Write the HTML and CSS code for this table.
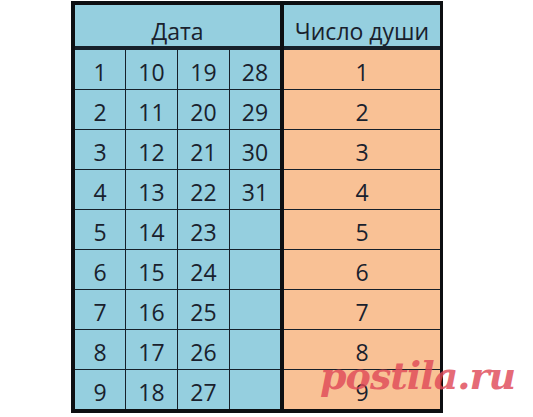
FILE: index.html
```html
<!DOCTYPE html>
<html lang="ru">
<head>
<meta charset="utf-8">
<title>Дата — Число души</title>
<link rel="stylesheet" href="styles.css">
</head>
<body>
<div class="page">
  <div class="table">
    <div class="dates">
      <div class="head">Дата</div>
      <div class="cell">1</div><div class="cell">10</div><div class="cell">19</div><div class="cell">28</div>
      <div class="cell">2</div><div class="cell">11</div><div class="cell">20</div><div class="cell">29</div>
      <div class="cell">3</div><div class="cell">12</div><div class="cell">21</div><div class="cell">30</div>
      <div class="cell">4</div><div class="cell">13</div><div class="cell">22</div><div class="cell">31</div>
      <div class="cell">5</div><div class="cell">14</div><div class="cell">23</div><div class="cell"></div>
      <div class="cell">6</div><div class="cell">15</div><div class="cell">24</div><div class="cell"></div>
      <div class="cell">7</div><div class="cell">16</div><div class="cell">25</div><div class="cell"></div>
      <div class="cell">8</div><div class="cell">17</div><div class="cell">26</div><div class="cell"></div>
      <div class="cell">9</div><div class="cell">18</div><div class="cell">27</div><div class="cell"></div>
    </div>
    <div class="soul">
      <div class="head">Число души</div>
      <div class="cell">1</div>
      <div class="cell">2</div>
      <div class="cell">3</div>
      <div class="cell">4</div>
      <div class="cell">5</div>
      <div class="cell">6</div>
      <div class="cell">7</div>
      <div class="cell">8</div>
      <div class="cell">9</div>
    </div>
  </div>
  <div class="watermark">postila.ru</div>
</div>
</body>
</html>
```

FILE: styles.css
```css
html, body {
  margin: 0;
  padding: 0;
  background: #ffffff;
}

.page {
  position: relative;
  width: 533px;
  height: 417px;
  padding: 1px 0 0 71px;
  box-sizing: border-box;
}

.table {
  display: flex;
  gap: 4px;
  width: fit-content;
  padding: 4px 3px 4px 4px;
  background: #0d0f12;
  font-family: "Open Sans", "DejaVu Sans", sans-serif;
  font-size: 23px;
  color: #19212d;
}

.dates,
.soul {
  display: grid;
  grid-template-rows: 44px repeat(9, 39px);
  row-gap: 1px;
  background: #16202a;
}

.dates {
  grid-template-columns: 50px 51px 51px 50px;
  column-gap: 1px;
}

.soul {
  grid-template-columns: 156px;
}

.head {
  grid-column: 1 / -1;
  margin-bottom: 3px;
  background: #95cfdf;
  display: flex;
  align-items: flex-end;
  justify-content: center;
  padding-bottom: 3px;
  line-height: 1;
}

.dates .cell {
  background: #95cfdf;
}

.soul .cell {
  background: #f9c195;
}

.cell {
  display: flex;
  align-items: center;
  justify-content: center;
  padding-top: 5px;
  box-sizing: border-box;
  line-height: 1;
}

.watermark {
  position: absolute;
  left: 320px;
  top: 357px;
  font-family: "DejaVu Serif", serif;
  font-weight: bold;
  font-style: italic;
  font-size: 38px;
  line-height: 1;
  color: rgba(224, 74, 88, 0.82);
  letter-spacing: -1px;
}
```
